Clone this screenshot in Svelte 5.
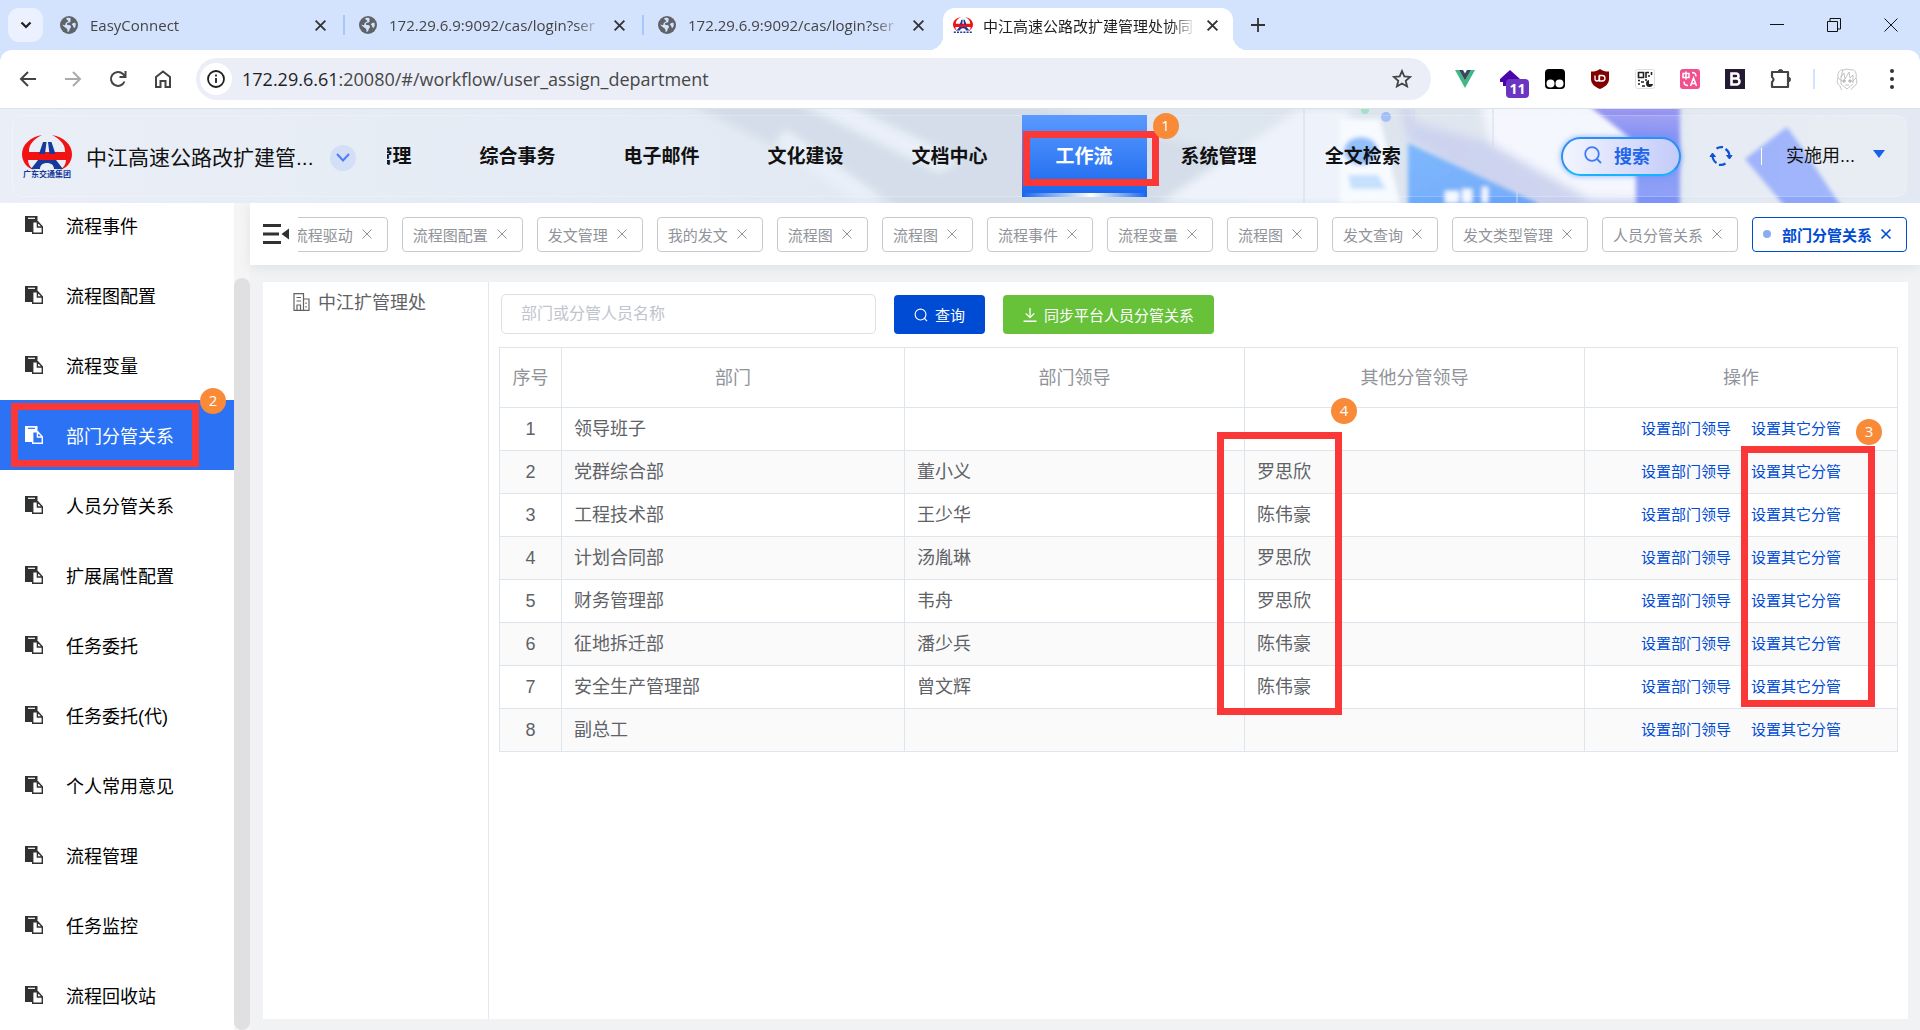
<script lang="ts">
    type MenuEntry = { label: string, active?: boolean }
    type Row = { dept: string, leader?: string, other?: string }

    const browserTabs = [
        'EasyConnect',
        '172.29.6.9:9092/cas/login?ser',
        '172.29.6.9:9092/cas/login?ser'
    ]

    const navItems: MenuEntry[] = [
        { label: '公文管理' },
        { label: '综合事务' },
        { label: '电子邮件' },
        { label: '文化建设' },
        { label: '文档中心' },
        { label: '工作流', active: true },
        { label: '系统管理' },
        { label: '全文检索' }
    ]

    const menu: MenuEntry[] = [
        { label: '流程事件' },
        { label: '流程图配置' },
        { label: '流程变量' },
        { label: '部门分管关系', active: true },
        { label: '人员分管关系' },
        { label: '扩展属性配置' },
        { label: '任务委托' },
        { label: '任务委托(代)' },
        { label: '个人常用意见' },
        { label: '流程管理' },
        { label: '任务监控' },
        { label: '流程回收站' }
    ]

    const openViews = [
        '流程驱动', '流程图配置', '发文管理', '我的发文', '流程图', '流程图', '流程事件',
        '流程变量', '流程图', '发文查询', '发文类型管理', '人员分管关系', '部门分管关系'
    ]
    let currentView = $state(12)

    const rows: Row[] = [
        { dept: '领导班子' },
        { dept: '党群综合部', leader: '董小义', other: '罗思欣' },
        { dept: '工程技术部', leader: '王少华', other: '陈伟豪' },
        { dept: '计划合同部', leader: '汤胤琳', other: '罗思欣' },
        { dept: '财务管理部', leader: '韦舟', other: '罗思欣' },
        { dept: '征地拆迁部', leader: '潘少兵', other: '陈伟豪' },
        { dept: '安全生产管理部', leader: '曾文辉', other: '陈伟豪' },
        { dept: '副总工' }
    ]

    let keyword = $state('')
</script>

{#snippet cross(size: number, width: number)}
    <svg width={size} height={size} viewBox="0 0 12 12" fill="none" stroke="currentColor" stroke-width={width}>
        <path d="M1.5 1.5 10.5 10.5M10.5 1.5 1.5 10.5" />
    </svg>
{/snippet}

{#snippet emblem()}
    <path d="M20 1C8 3 0 11 0 20c0 8 5 14 12 16-4-3-6-6-6-10h38c0 4-2 7-6 10 7-2 12-8 12-16C50 11 42 3 30 1c8 4 13 9 13 16v1H7v-1C7 10 12 5 20 1Z" fill="#f11313" />
    <path d="M21 8h3.500l-1.500 12h-6ZM26 8h3.500l4 12h-6ZM16 26h18l7 9h-9c0-4-3-6-7-6s-7 2-7 6H9Z" fill="#163a9c" />
{/snippet}

<div class="page">
    <div class="tab-strip">
        <button class="tab-search" aria-label="搜索标签页">
            <svg width="12" height="8" viewBox="0 0 12 8" fill="none" stroke="#1f1f1f" stroke-width="2.200"><path d="m1.500 1.500 4.500 4.500 4.500-4.500" /></svg>
        </button>
        {#each browserTabs as title}
            <div class="browser-tab">
                <svg width="18" height="18" viewBox="0 0 18 18">
                    <circle cx="9" cy="9" r="9" fill="#5f6368" />
                    <path d="M10 2c1.500 1 0 2 .5 3s-1 1.500-2.500 1.800S6.500 9 8 9s3 .3 3 1.800-1.500 1.700-1.500 3-1 2.200-2 2.200c0-1 .2-2.500-.8-3.500S2.500 10 2.300 8.500l2.200.8c1.300.2.5-1.800 1.500-2.600S9 5.500 8 4.500 6 3.600 6.300 2.500 9 1.600 10 2ZM12 8c1-1 2.500-1.500 3.500-1 .6 2 0 4-1 5-1-.2-1.300-1-1.300-2S11.300 9.200 12 8Z" fill="#d3e2fd" />
                </svg>
                <span class="tab-title">{title}</span>
                <button class="plain" aria-label="关闭">{@render cross(13, 1.7)}</button>
            </div>
        {/each}
        <div class="browser-tab current">
            <svg width="20" height="18" viewBox="0 0 50 42">{@render emblem()}<path d="M2 39h46" stroke="#163a9c" stroke-width="4" stroke-dasharray="5 3" /></svg>
            <span class="tab-title">中江高速公路改扩建管理处协同</span>
            <button class="plain" aria-label="关闭">{@render cross(13, 1.8)}</button>
        </div>
        <button class="plain new-tab" aria-label="新标签页">
            <svg width="14" height="14" viewBox="0 0 14 14" stroke="#333" stroke-width="1.800"><path d="M7 0v14M0 7h14" /></svg>
        </button>
        <div class="window-controls">
            <button class="plain" aria-label="最小化"><svg width="14" height="14" viewBox="0 0 14 14" stroke="#111"><path d="M0 6.500h14" /></svg></button>
            <button class="plain" aria-label="还原"><svg width="14" height="14" viewBox="0 0 14 14" fill="none" stroke="#111"><path d="M.5 3.500h10v10H.5ZM3 3V.500h10.500V11H11" /></svg></button>
            <button class="plain" aria-label="关闭窗口"><svg width="14" height="14" viewBox="0 0 14 14" stroke="#111"><path d="m.5.500 13 13M13.500.500l-13 13" /></svg></button>
        </div>
    </div>

    <div class="toolbar">
        <div class="history">
            <button class="plain" aria-label="后退"><svg width="18" height="18" viewBox="0 0 18 18" fill="none" stroke="#444" stroke-width="2"><path d="M17 9H2M9 2 2 9l7 7" /></svg></button>
            <button class="plain" aria-label="前进"><svg width="18" height="18" viewBox="0 0 18 18" fill="none" stroke="#aaa" stroke-width="2"><path d="M1 9h15M9 2l7 7-7 7" /></svg></button>
            <button class="plain" aria-label="刷新"><svg width="18" height="18" viewBox="0 0 18 18" fill="none" stroke="#444" stroke-width="2"><path d="M15.500 11.500A7 7 0 1 1 14 4l2 2.500M16.500 1v6h-6" /></svg></button>
            <button class="plain" aria-label="主页"><svg width="18" height="18" viewBox="0 0 18 18" fill="none" stroke="#444" stroke-width="2"><path d="M2 17V7l7-5.500L16 7v10h-4.500v-6h-5v6Z" /></svg></button>
        </div>
        <div class="address">
            <span class="site-info">
                <svg width="18" height="18" viewBox="0 0 18 18" fill="none" stroke="#1f1f1f" stroke-width="1.800"><circle cx="9" cy="9" r="8" /><path d="M9 8v5M9 4.500v2" /></svg>
            </span>
            <span class="url"><b>172.29.6.61</b>:20080/#/workflow/user_assign_department</span>
            <button class="plain" aria-label="收藏"><svg width="20" height="20" viewBox="0 0 20 20" fill="none" stroke="#444" stroke-width="1.800"><path d="m10 2 2.300 5.400 5.900.5-4.500 3.900 1.400 5.700-5.100-3-5.100 3 1.400-5.700-4.500-3.900 5.900-.5Z" /></svg></button>
        </div>
        <div class="extensions">
            <svg width="20" height="18" viewBox="0 0 20 18"><path d="M0 0h4l6 10.500L16 0h4L10 18Z" fill="#41b883" /><path d="M4 0h4l2 3.600L12 0h4l-6 10.500Z" fill="#34495e" /></svg>
            <span class="ext-house">
                <svg width="20" height="18" viewBox="0 0 20 18"><path d="M10 0 20 9h-3v7H3v-4H0V9Z" fill="#4b05ad" /></svg>
                <span class="ext-count">11</span>
            </span>
            <svg width="20" height="20" viewBox="0 0 20 20"><rect width="20" height="20" rx="4" fill="#000" /><circle cx="5.500" cy="14.500" r="4" fill="#fff" /><circle cx="14.500" cy="14.500" r="4" fill="#fff" /></svg>
            <svg width="20" height="20" viewBox="0 0 20 20"><path d="M10 0c3 2 5 2.500 9 2.500V10c0 5-4 8-9 10-5-2-9-5-9-10V2.500C5 2.500 7 2 10 0Z" fill="#800000" /><path d="M5 6.500v3.500q0 2 2 2t2-2V6.500M9.500 12V6.500h2.500q3 0 3 2.700T12 12Z" fill="none" stroke="#fff" stroke-width="1.300" /></svg>
            <svg width="20" height="20" viewBox="0 0 20 20"><rect x=".5" y=".5" width="19" height="19" rx="2" fill="#fff" stroke="#ddd" /><path d="M3.500 3.500h5v5h-5ZM11 3.500h3M11 3v6M16.500 3v3M13 7h2M3 11.500h2M6 13h3M3 15h2M7 17h3M10 11h2" fill="none" stroke="#222" stroke-width="1.600" /><path d="M14 11a3.500 3.500 0 1 0 4 4h-4Z" fill="#222" /></svg>
            <svg width="20" height="20" viewBox="0 0 20 20"><rect width="20" height="20" rx="3" fill="#f2508f" /><path d="M3 4.500h6v4H3ZM6 2.500v8M12 3.500q4 0 4 4M4 12.500q0 4 4 4M10.500 17l3-8 3 8M11.500 14.500h4" fill="none" stroke="#fff" stroke-width="1.500" /></svg>
            <svg width="20" height="20" viewBox="0 0 20 20"><rect width="20" height="20" fill="#251a33" /><path d="M6.500 4.500h4.500a2.500 2.500 0 0 1 0 5H6.500Zm0 5h5a3 3 0 0 1 0 6h-5Z" fill="none" stroke="#fff" stroke-width="2.600" /></svg>
            <svg width="22" height="20" viewBox="0 0 22 20"><path d="M2 3h16v15H2v-5q3-2.500 0-5Z" fill="none" stroke="#444" stroke-width="2.200" stroke-linejoin="round" /><path d="M8 3a2.500 2.500 0 0 1 5 0ZM18 8a2.500 2.500 0 0 1 0 5Z" fill="#444" stroke="#444" /></svg>
        </div>
        <span class="tool-divider"></span>
        <svg class="avatar" width="24" height="24" viewBox="0 0 24 24" fill="none" stroke="#aaa" stroke-width=".7"><path d="M3 11C2 6 5 2 8 3l4-1 4 1c4-1 6 3 5 8 2 4 0 8-3 9M3 11c-2 4 0 7 3 9M8 3 6 10l3-4 1 6 4-7 1 6 3-3v8M6 10v7l6 5 6-5M3 11l4 3M21 11l-4 4M10 18h4M5 20l2 3M18 20l-2 3" /><path d="M8 13h2v2H8ZM14 13h2v2h-2Z" stroke="#888" /></svg>
        <button class="plain" aria-label="菜单"><svg width="4" height="20" viewBox="0 0 4 20" fill="#333"><circle cx="2" cy="2" r="2" /><circle cx="2" cy="10" r="2" /><circle cx="2" cy="18" r="2" /></svg></button>
    </div>

    <header class="header">
        <svg class="backdrop" width="1300" height="94" viewBox="0 0 1300 94">
            <defs>
                <filter id="soft"><feGaussianBlur stdDeviation="5" /></filter>
                <filter id="edge"><feGaussianBlur stdDeviation="2" /></filter>
                <linearGradient id="violet" x1="0" y1="0" x2="0" y2="1"><stop offset="0" stop-color="#a09cf0" /><stop offset="0.300" stop-color="#7482f3" /><stop offset="1" stop-color="#7e96f6" /></linearGradient>
                <linearGradient id="sky" x1="0" y1="0" x2="1" y2="1"><stop offset="0" stop-color="#74b3fd" /><stop offset="1" stop-color="#66a2fa" /></linearGradient>
            </defs>
            <g filter="url(#soft)">
                <path d="M60 -10h340l220 60v60H300Z" fill="#d2dce8" />
                <path d="M165 20l100 70h-30l-80-55ZM215 -10l125 60-20 14L170 -10Z" fill="#e9f0f9" />
                <path d="M540 94 680 0h50v94Z" fill="#eef3fb" />
                <path d="M780 -10h100l140 60v60h-100L788 30Z" fill="#c9d0ee" />
                <path d="M785 -10h90l60 60-140-36Z" fill="#dde4ee" />
                <path d="M860 -10h120l40 40v60h-50L870 34Z" fill="#f4f6fe" />
                <path d="M1070 -10h240v120h-240Z" fill="#e3e9f2" />
            </g>
            <g filter="url(#edge)">
                <path d="M720 10h40l20 84h-60Z" fill="#f7fbff" />
                <ellipse cx="741" cy="42" rx="17" ry="14" fill="#8dbcfb" />
                <path d="M728 66h30l8 14h-35Z" fill="#c3dffd" />
                <path d="M788 34 917 94v6H788Z" fill="url(#sky)" />
                <path d="M825 82h14v12h-14zM842 80h10v14h-10zM862 78h6v16h-6z" fill="#f5faff" />
                <path d="M968 -4h92v104h-44V34Z" fill="url(#violet)" />
                <path d="m1125 50 42-32 16 22 40 60h-56Z" fill="#8da6fa" />
            </g>
            <path d="M684 0v94M794 0v24M873 0v40M897 80v14" stroke="#cfd8e6" stroke-width="1" />
            <circle cx="745" cy="1" r="4" fill="#a4dfc6" />
            <circle cx="766" cy="8" r="5" fill="#9ebcf5" />
        </svg>
        <a class="brand" href="#/">
            <span class="logo">
                <svg width="50" height="36" viewBox="0 0 50 36">{@render emblem()}</svg>
                <span class="logo-name">广东交通集团</span>
            </span>
            <span class="site-name">中江高速公路改扩建管...</span>
        </a>
        <button class="switch" aria-label="切换单位">
            <svg width="14" height="9" viewBox="0 0 14 9" fill="none" stroke="#4f7df9" stroke-width="2"><path d="m1 1 6 6.500L13 1" /></svg>
        </button>
        <nav class="nav">
            <div class="nav-list">
                {#each navItems as item}
                    <a class="nav-item" class:active={item.active} href="#/{item.label}">
                        {item.label}
                        {#if item.active}
                            <span class="mark mark-nav"></span>
                            <span class="badge badge-nav">1</span>
                        {/if}
                    </a>
                {/each}
            </div>
        </nav>
        <div class="header-tools">
            <button class="search">
                <svg width="18" height="18" viewBox="0 0 18 18" fill="none" stroke="#3d7df0" stroke-width="1.800"><circle cx="8" cy="8" r="6.800" /><path d="m13 13 4 4" /></svg>
                搜索
            </button>
            <button class="plain" aria-label="刷新页面">
                <svg width="24" height="22" viewBox="0 0 24 22" fill="none" stroke="#0e50d8" stroke-width="2.200"><path d="M3.500 11a9 9 0 0 0 4 7M10 19.800a9 9 0 0 0 6.500-1.300M20.500 11a9 9 0 0 0-4-7M14 2.200a9 9 0 0 0-6.500 1.300" /><path d="m1 11.500 2.500-3.500 3 3.500ZM17.500 10.500l3 3.500 2.500-3.500Z" fill="#0e50d8" stroke-width="1" /></svg>
            </button>
            <span class="header-divider"></span>
            <button class="plain user">
                实施用...
                <svg width="12" height="8" viewBox="0 0 12 8"><path d="M0 0h12L6 8Z" fill="#1663e6" /></svg>
            </button>
        </div>
    </header>

    <div class="body">
        <aside class="sidebar">
            <ul class="menu">
                {#each menu as entry}
                    <li>
                        <a class="menu-item" class:active={entry.active} href="#/{entry.label}">
                            <svg width="18" height="18" viewBox="0 0 18 18">
                                <path d="M0 0h12.500v5H8v11H0Z" fill="currentColor" />
                                <path class="clip" d="M3 2.300h7" />
                                <path class="sheet" d="M7.700 5.700h5l4.600 5v6.600H7.700ZM12.400 5.700v5.300h4.900" />
                            </svg>
                            {entry.label}
                            {#if entry.active}
                                <span class="mark mark-menu"></span>
                                <span class="badge badge-menu">2</span>
                            {/if}
                        </a>
                    </li>
                {/each}
            </ul>
            <div class="track"><div class="thumb"></div></div>
        </aside>

        <main class="main">
            <div class="views">
                <button class="plain fold" aria-label="收起菜单">
                    <svg width="26" height="20" viewBox="0 0 26 20" fill="#303133"><path d="M0 0h18v3H0ZM0 8.500h16v3H0ZM0 17h18v3H0ZM26 4.500v11l-7.500-5.500Z" /></svg>
                </button>
                <div class="view-list">
                    {#each openViews as view, i}
                        <button class="view" class:active={i === currentView} onclick={() => currentView = i}>
                            {#if i === currentView}<i class="dot"></i>{/if}
                            <span>{view}</span>
                            {@render cross(12, i === currentView ? 1.6 : 1)}
                        </button>
                    {/each}
                </div>
            </div>

            <div class="panel">
                <div class="tree">
                    <svg width="17" height="18" viewBox="0 0 17 18" fill="none" stroke="#606266" stroke-width="1.200"><path d="M1 17.300V.700h9.500v16.600M10.500 6H16v11.300H.500M3.500 4.500H8M3.500 8H8M4 17v-5h3.500v5M13 9.500v1.500M13 13v1.500" /></svg>
                    中江扩管理处
                </div>
                <div class="content">
                    <form class="filters" onsubmit={(e) => e.preventDefault()}>
                        <input type="text" placeholder="部门或分管人员名称" aria-label="部门或分管人员名称" bind:value={keyword} />
                        <button class="btn primary">
                            <svg width="14" height="14" viewBox="0 0 15 15" fill="none" stroke="#fff" stroke-width="1.200"><circle cx="7" cy="7" r="5.800" /><path d="m11 11 3 3" /></svg>
                            查询
                        </button>
                        <button class="btn success" type="button">
                            <svg width="14" height="14" viewBox="0 0 13 13" fill="none" stroke="#fff" stroke-width="1.200"><path d="M6.500 0v9M2.500 5l4 4 4-4M.5 12.300h12" /></svg>
                            同步平台人员分管关系
                        </button>
                    </form>
                    <table>
                        <colgroup>
                            <col class="col-index" /><col class="col-dept" /><col /><col /><col class="col-action" />
                        </colgroup>
                        <thead>
                            <tr><th>序号</th><th>部门</th><th>部门领导</th><th>其他分管领导</th><th>操作</th></tr>
                        </thead>
                        <tbody>
                            {#each rows as row, i}
                                <tr>
                                    <td class="center">{i + 1}</td>
                                    <td>{row.dept}</td>
                                    <td>{row.leader ?? ''}</td>
                                    <td class="anchor">
                                        {row.other ?? ''}
                                        {#if i === 0}
                                            <span class="mark mark-other"></span>
                                            <span class="badge badge-other">4</span>
                                        {/if}
                                    </td>
                                    <td class="center anchor">
                                        <div class="actions">
                                            <a href="#/leader/{i + 1}">设置部门领导</a>
                                            <a href="#/other/{i + 1}">设置其它分管</a>
                                        </div>
                                        {#if i === 0}
                                            <span class="mark mark-action"></span>
                                            <span class="badge badge-action">3</span>
                                        {/if}
                                    </td>
                                </tr>
                            {/each}
                        </tbody>
                    </table>
                </div>
            </div>
        </main>
    </div>
</div>

<style>
    :global(body) {
        overflow: hidden;
    }

    .page {
        height: 100vh;
        display: flex;
        flex-direction: column;
        font-family: "Liberation Sans", "Noto Sans CJK SC", sans-serif;
        font-size: 18px;
        color: #000;
        background: #d3e2fd;
    }

    .page * {
        box-sizing: border-box;
    }

    svg {
        display: block;
        flex: none;
    }

    a {
        color: inherit;
        text-decoration: none;
    }

    button {
        font-family: inherit;
        cursor: pointer;
    }

    .plain {
        border: none;
        background: none;
        padding: 0;
        color: #333;
        display: flex;
        align-items: center;
    }

    .tab-strip {
        height: 50px;
        flex: none;
        display: flex;
        align-items: center;
        padding-left: 8px;
        font-family: "Open Sans", "Noto Sans CJK SC", sans-serif;
        font-size: 15px;
        color: #444;
    }

    .tab-search {
        width: 35px;
        height: 34px;
        border: none;
        border-radius: 11px;
        background: #ebf1fe;
        display: grid;
        place-items: center;
        margin-right: 3px;
    }

    .browser-tab {
        width: 299px;
        height: 42px;
        flex: 0 1 auto;
        display: flex;
        align-items: center;
        gap: 12px;
        padding: 0 16px 0 14px;
    }

    .browser-tab:not(.current) {
        height: 20px;
        border-right: 2px solid #a8c7fa;
    }

    .browser-tab:nth-child(4) {
        border-right-color: transparent;
    }

    .browser-tab.current {
        position: relative;
        width: 290px;
        align-self: flex-end;
        background: #fff;
        border-radius: 12px 12px 0 0;
        color: #1f1f1f;
        padding: 0 14px 8px 10px;
        gap: 10px;
    }

    .browser-tab.current::before,
    .browser-tab.current::after {
        content: "";
        position: absolute;
        bottom: 0;
        width: 14px;
        height: 14px;
    }

    .browser-tab.current::before {
        right: 100%;
        background: radial-gradient(circle at 0 0, transparent 14px, #fff 14px);
    }

    .browser-tab.current::after {
        left: 100%;
        background: radial-gradient(circle at 100% 0, transparent 14px, #fff 14px);
    }

    .tab-title {
        flex: 1;
        overflow: hidden;
        white-space: nowrap;
        mask-image: linear-gradient(90deg, #000 88%, transparent);
    }

    .new-tab {
        margin-left: 18px;
    }

    .window-controls {
        display: flex;
        gap: 43px;
        margin-left: auto;
        padding-right: 22px;
    }

    .toolbar {
        height: 59px;
        flex: none;
        display: flex;
        align-items: center;
        background: #fff;
        border-radius: 12px 12px 0 0;
        border-bottom: 1px solid #dde1e4;
        padding: 0 26px 0 19px;
    }

    .history {
        display: flex;
        gap: 27px;
        margin-right: 24px;
    }

    .address {
        flex: 1;
        height: 42px;
        display: flex;
        align-items: center;
        background: #ebeef7;
        border-radius: 21px;
        padding: 0 19px 0 4px;
    }

    .site-info {
        width: 32px;
        height: 32px;
        border-radius: 50%;
        background: #fff;
        display: grid;
        place-items: center;
        margin-right: 10px;
    }

    .url {
        flex: 1;
        font-family: "Open Sans", sans-serif;
        font-size: 18px;
        color: #474747;
    }

    .url b {
        font-weight: normal;
        color: #1f1f1f;
    }

    .extensions {
        display: flex;
        align-items: center;
        gap: 25px;
        margin-left: 24px;
    }

    .ext-house {
        position: relative;
    }

    .ext-count {
        position: absolute;
        left: 6px;
        top: 9px;
        width: 23px;
        height: 19px;
        border-radius: 4px;
        background: #6a35c2;
        color: #fff;
        font: bold 14px/19px "Open Sans", sans-serif;
        text-align: center;
    }

    .tool-divider {
        width: 2px;
        height: 20px;
        background: #d3e3fd;
        margin: 0 20px 0 21px;
    }

    .avatar {
        margin-right: 31px;
    }

    .header {
        position: relative;
        height: 94px;
        flex: none;
        display: flex;
        align-items: center;
        padding: 0 35px 0 22px;
        background: linear-gradient(90deg, #e9eef7, #e2e9f3 40%, #dbe3ed 70%, #e4eaf3);
    }

    .header::after {
        content: "";
        position: absolute;
        inset: 6px 13px 6px 12px;
        border-radius: 10px;
        border: 1px solid rgba(255, 255, 255, 0.2);
        background: linear-gradient(90deg, rgba(255, 255, 255, 0.05) 70%, rgba(255, 255, 255, 0.2));
    }

    .header > * {
        z-index: 1;
    }

    .header .backdrop {
        position: absolute;
        right: 0;
        top: 0;
        z-index: 0;
    }

    .brand {
        display: flex;
        align-items: center;
        gap: 14px;
        font-size: 21px;
        color: #111;
        white-space: nowrap;
    }

    .logo {
        width: 50px;
    }

    .logo-name {
        display: block;
        font-size: 8px;
        line-height: 9px;
        font-weight: bold;
        text-align: center;
        color: #163a9c;
    }

    .switch {
        width: 26px;
        height: 26px;
        flex: none;
        border: none;
        border-radius: 50%;
        background: #d3dff7;
        display: grid;
        place-items: center;
        padding: 0;
        margin: 3px 31px 0 16px;
    }

    .nav {
        flex: 1;
        height: 94px;
        overflow: hidden;
        font-size: 19px;
        font-weight: bold;
        color: #111;
    }

    /* the list is scrolled, its first entry is partly out of sight */
    .nav-list {
        display: flex;
        margin-left: -85px;
        padding-top: 6px;
    }

    .nav-item {
        position: relative;
        flex: none;
        height: 82px;
        line-height: 84px;
        padding: 0 34px;
    }

    .nav-item.active {
        z-index: 1;
        color: #fff;
        background:
            linear-gradient(90deg, #1667ee, #fff 55%, #1667ee) bottom / 100% 4px no-repeat,
            linear-gradient(#5a9aff, #1967ee);
    }

    .header-tools {
        display: flex;
        align-items: center;
        gap: 28px;
    }

    .search {
        width: 120px;
        height: 39px;
        display: flex;
        align-items: center;
        justify-content: center;
        gap: 12px;
        padding: 0 12px 2px 4px;
        border: 2px solid #2f8df5;
        border-bottom-color: #16b4fb;
        border-radius: 20px;
        background: linear-gradient(90deg, #f2f5fe, #c3cbf9);
        box-shadow: 0 0 5px 1px rgba(80, 150, 255, 0.5);
        color: #1f66ea;
        font-size: 18px;
        font-weight: bold;
    }

    .header-divider {
        width: 1px;
        height: 17px;
        background: #fff;
    }

    .user {
        gap: 18px;
        font-size: 18px;
        color: #111;
        margin-left: -4px;
        padding-bottom: 4px;
    }

    .body {
        flex: 1;
        min-height: 0;
        display: flex;
        background: #f1f2f4;
    }

    .sidebar {
        width: 250px;
        flex: none;
        display: flex;
        overflow: hidden;
        background: #fff;
    }

    /* scrolled by a few pixels, like the track beside it */
    .menu {
        flex: 1;
        list-style: none;
        margin: -13px 0 0;
        padding: 0;
    }

    .menu-item {
        position: relative;
        height: 70px;
        display: flex;
        align-items: center;
        gap: 23px;
        padding: 0 0 1px 25px;
    }

    .menu-item svg {
        color: #303133;
    }

    .menu-item.active {
        background: #2b72f4;
        color: #fff;
    }

    .menu-item.active svg {
        color: #fff;
    }

    .clip {
        stroke: #fff;
        stroke-width: 1.2;
    }

    .sheet {
        fill: #fff;
        stroke: #303133;
        stroke-width: 1.4;
    }

    .active .clip {
        stroke: #2b72f4;
    }

    .active .sheet {
        fill: #2b72f4;
        stroke: #fff;
    }

    .track {
        width: 16px;
        background: #f5f5f5;
        padding-top: 75px;
        display: flex;
    }

    .thumb {
        flex: 1;
        border-radius: 8px;
        background: #e0e0e2;
    }

    .main {
        flex: 1;
        min-width: 0;
        display: flex;
        flex-direction: column;
    }

    .views {
        height: 62px;
        flex: none;
        display: flex;
        align-items: center;
        padding: 0 13px;
        background: #fff;
        box-shadow: 0 2px 12px rgba(0, 0, 0, 0.08);
    }

    .fold {
        margin-right: 9px;
    }

    .view-list {
        flex: 1;
        min-width: 0;
        display: flex;
        justify-content: flex-end;
        gap: 14px;
        overflow: hidden;
    }

    .view {
        flex: none;
        height: 35px;
        display: flex;
        align-items: center;
        gap: 8px;
        padding: 0 14px 0 10px;
        border: 1px solid #c8c9cc;
        border-radius: 4px;
        background: #fff;
        color: #909399;
        font-size: 15px;
        white-space: nowrap;
    }

    .view.active {
        border-color: #004bd4;
        color: #004bd4;
        font-weight: bold;
    }

    .dot {
        width: 8px;
        height: 8px;
        border-radius: 50%;
        background: #8badee;
        margin-right: 3px;
    }

    .panel {
        flex: 1;
        display: flex;
        margin: 17px 12px 11px 13px;
        background: #fff;
    }

    .tree {
        width: 226px;
        flex: none;
        display: flex;
        align-items: flex-start;
        gap: 8px;
        padding: 11px 0 0 30px;
        border-right: 1px solid #e4e7ed;
        color: #606266;
        line-height: 20px;
    }

    .content {
        flex: 1;
        padding: 12px 10px;
    }

    .filters {
        display: flex;
        gap: 18px;
        margin: 0 0 13px 2px;
    }

    .filters input {
        width: 375px;
        height: 40px;
        padding: 0 19px;
        border: 1px solid #dcdfe6;
        border-radius: 5px;
        font-family: inherit;
        font-size: 16px;
        color: #606266;
    }

    .filters input::placeholder {
        color: #c0c4cc;
    }

    .btn {
        height: 39px;
        align-self: flex-end;
        display: flex;
        align-items: center;
        gap: 7px;
        padding: 0 20px;
        border: none;
        border-radius: 4px;
        color: #fff;
        font-size: 15px;
    }

    .primary {
        background: #004bd4;
    }

    .success {
        background: #67c23a;
    }

    table {
        width: 100%;
        table-layout: fixed;
        border-collapse: collapse;
        color: #606266;
    }

    .col-index {
        width: 62px;
    }

    .col-dept {
        width: 343px;
    }

    .col-action {
        width: 313px;
    }

    th,
    td {
        border: 1px solid #dfe5ec;
        padding: 0 12px;
        text-align: left;
        height: 43px;
        line-height: 24px;
    }

    th {
        height: 60px;
        padding: 0;
        text-align: center;
        font-weight: normal;
        color: #909399;
    }

    tbody tr:nth-child(even) {
        background: #fafafa;
    }

    .center {
        text-align: center;
    }

    .anchor {
        position: relative;
    }

    .actions {
        display: flex;
        justify-content: center;
        gap: 20px;
        font-size: 15px;
        color: #004bd4;
    }

    .mark {
        position: absolute;
        z-index: 2;
        border: 7px solid #fb3838;
        pointer-events: none;
    }

    .badge {
        position: absolute;
        z-index: 3;
        width: 26px;
        height: 26px;
        border-radius: 50%;
        background: #f88a38;
        color: #fff;
        font: 15px/24px "Open Sans", sans-serif;
        text-align: center;
    }

    .mark-nav {
        inset: 16px -12px 11px 1px;
    }

    .badge-nav {
        right: -32px;
        top: -2px;
    }

    .mark-menu {
        inset: 3px 35px 3px 11px;
    }

    .badge-menu {
        right: 8px;
        top: -12px;
    }

    .mark-other {
        left: -28px;
        top: 24px;
        width: 125px;
        height: 283px;
    }

    .badge-other {
        left: 86px;
        top: -10px;
    }

    .mark-action {
        left: 50%;
        top: 38px;
        width: 134px;
        height: 261px;
    }

    .badge-action {
        left: calc(50% + 115px);
        top: 11px;
    }
</style>
